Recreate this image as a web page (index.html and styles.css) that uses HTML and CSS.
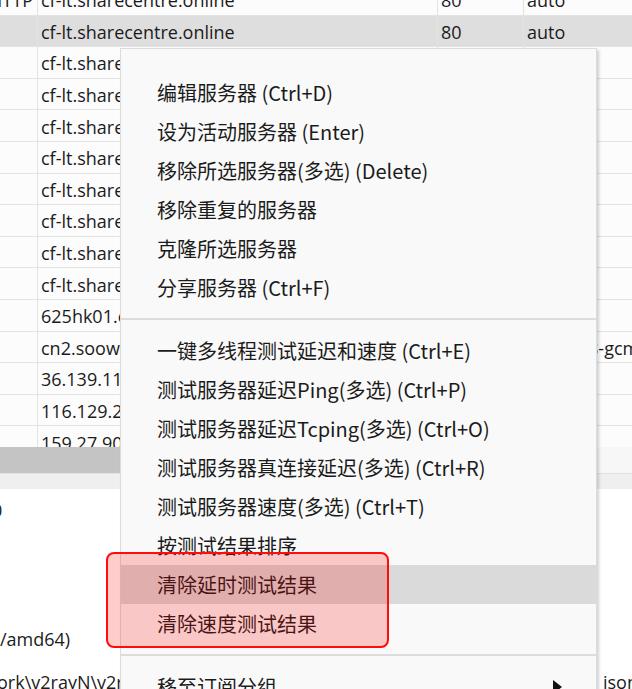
FILE: index.html
```html
<!DOCTYPE html>
<html lang="zh-CN">
<head>
<meta charset="utf-8">
<title>v2rayN</title>
<link rel="stylesheet" href="styles.css">
</head>
<body>
<div class="app">
  <div class="grid">
    <div class="row"><div class="c0">HTTP</div><div class="c1">cf-lt.sharecentre.online</div><div class="c2">80</div><div class="c3">auto</div></div>
    <div class="row sel"><div class="c0"></div><div class="c1">cf-lt.sharecentre.online</div><div class="c2">80</div><div class="c3">auto</div></div>
    <div class="row"><div class="c0"></div><div class="c1">cf-lt.sharecentre.online</div><div class="c2">80</div><div class="c3">auto</div></div>
    <div class="row"><div class="c0"></div><div class="c1">cf-lt.sharecentre.online</div><div class="c2">80</div><div class="c3">auto</div></div>
    <div class="row"><div class="c0"></div><div class="c1">cf-lt.sharecentre.online</div><div class="c2">80</div><div class="c3">auto</div></div>
    <div class="row"><div class="c0"></div><div class="c1">cf-lt.sharecentre.online</div><div class="c2">80</div><div class="c3">auto</div></div>
    <div class="row"><div class="c0"></div><div class="c1">cf-lt.sharecentre.online</div><div class="c2">80</div><div class="c3">auto</div></div>
    <div class="row"><div class="c0"></div><div class="c1">cf-lt.sharecentre.online</div><div class="c2">80</div><div class="c3">auto</div></div>
    <div class="row"><div class="c0"></div><div class="c1">cf-lt.sharecentre.online</div><div class="c2">80</div><div class="c3">auto</div></div>
    <div class="row"><div class="c0"></div><div class="c1">cf-lt.sharecentre.online</div><div class="c2">80</div><div class="c3">auto</div></div>
    <div class="row"><div class="c0"></div><div class="c1">625hk01.example.net</div><div class="c2">443</div><div class="c3">auto</div></div>
    <div class="row"><div class="c0"></div><div class="c1">cn2.soowx.example.com</div><div class="c2">443</div><div class="c3 sec">aes-128-gcm</div></div>
    <div class="row"><div class="c0"></div><div class="c1">36.139.117.20</div><div class="c2">443</div><div class="c3"></div></div>
    <div class="row"><div class="c0"></div><div class="c1">116.129.233.15</div><div class="c2">443</div><div class="c3"></div></div>
    <div class="row"><div class="c0"></div><div class="c1">159.27.90.101</div><div class="c2">443</div><div class="c3"></div></div>
  </div>
  <div class="hscroll"><div class="thumb"></div></div>
  <div class="splitter"></div>
  <div class="log">
    <div class="line"><span class="edge">0</span></div>
    <div class="line"></div>
    <div class="line"></div>
    <div class="line">/amd64)</div>
    <div class="line split"><span class="lt">ork\v2rayN\v2rayN\guiConfigs</span><span class="rt">ison</span></div>
  </div>

  <div class="menu">
    <div class="item">编辑服务器 (Ctrl+D)</div>
    <div class="item">设为活动服务器 (Enter)</div>
    <div class="item">移除所选服务器(多选) (Delete)</div>
    <div class="item">移除重复的服务器</div>
    <div class="item">克隆所选服务器</div>
    <div class="item">分享服务器 (Ctrl+F)</div>
    <div class="sep"></div>
    <div class="item">一键多线程测试延迟和速度 (Ctrl+E)</div>
    <div class="item">测试服务器延迟Ping(多选) (Ctrl+P)</div>
    <div class="item">测试服务器延迟Tcping(多选) (Ctrl+O)</div>
    <div class="item">测试服务器真连接延迟(多选) (Ctrl+R)</div>
    <div class="item">测试服务器速度(多选) (Ctrl+T)</div>
    <div class="item">按测试结果排序</div>
    <div class="item hover">清除延时测试结果</div>
    <div class="item">清除速度测试结果</div>
    <div class="sep"></div>
    <div class="item sub">移至订阅分组<span class="arrow"></span></div>
  </div>
  <div class="mark"></div>
</div>
</body>
</html>
```

FILE: styles.css
```css
html, body {
  margin: 0;
  padding: 0;
  height: 100%;
  overflow: hidden;
  background: #ffffff;
}
.app {
  position: relative;
  height: 100%;
  overflow: hidden;
  font-family: "Noto Sans CJK SC", "Noto Sans", sans-serif;
  font-size: 20px;
  color: #1b1b1b;
}
.grid {
  margin-top: -16px;
  height: 463px;
  overflow: hidden;
  background: #fcfcfc;
  font-family: "Open Sans", "Noto Sans CJK SC", sans-serif;
  font-size: 18px;
}
.row {
  display: grid;
  grid-template-columns: 38px 400px 86px 1fr;
  height: 31.6px;
  box-sizing: border-box;
  border-bottom: 1px solid #e3e3e3;
}
.row.sel { background: #dedede; }
.row > div {
  display: flex;
  align-items: center;
  white-space: nowrap;
  overflow: hidden;
  padding-left: 3px;
  padding-top: 2px;
  border-right: 1px solid #e3e3e3;
  line-height: 1;
}
.row > .c0 {
  justify-content: flex-end;
  padding-left: 0;
  padding-right: 4px;
}
.row > .c3 { border-right: none; }
.row > .c3.sec { padding-left: 9px; }
.hscroll {
  height: 26px;
  background: #f7f7f7;
}
.thumb {
  width: 420px;
  height: 100%;
  background: #c4c4c4;
}
.splitter {
  height: 16px;
  background: #efefef;
  border-top: 1px solid #e2e2e2;
  box-sizing: border-box;
}
.log {
  background: #ffffff;
  font-family: "Open Sans", "Noto Sans CJK SC", sans-serif;
  font-size: 18px;
}
.line {
  height: 43px;
  line-height: 43px;
  white-space: nowrap;
  overflow: hidden;
}
.edge { margin-left: -8px; }
.line.split {
  display: grid;
  grid-template-columns: 603px 1fr;
}
.lt { margin-left: -3px; overflow: hidden; }
.rt { overflow: hidden; }

.menu {
  position: absolute;
  left: 120px;
  top: 48px;
  width: 477px;
  height: 700px;
  box-sizing: border-box;
  padding-top: 24px;
  background: #f9f9f9;
  border: 1px solid #dcdcdc;
  box-shadow: 2px 2px 3px rgba(0, 0, 0, 0.18);
}
.item {
  height: 39px;
  display: flex;
  align-items: center;
  padding-left: 36px;
  white-space: nowrap;
  line-height: 1;
}
.item.hover { background: #dadada; }
.arrow {
  margin-left: auto;
  margin-right: 34px;
  width: 0;
  height: 0;
  border-left: 9px solid #111;
  border-top: 7px solid transparent;
  border-bottom: 7px solid transparent;
}
.sep {
  height: 2px;
  margin: 11px 0;
  background: #dcdcdc;
}
.mark {
  position: absolute;
  left: 106px;
  top: 552px;
  width: 283px;
  height: 96px;
  box-sizing: border-box;
  border: 2px solid #ff0d0d;
  border-radius: 8px;
  background: rgba(255, 0, 0, 0.2);
}
```
